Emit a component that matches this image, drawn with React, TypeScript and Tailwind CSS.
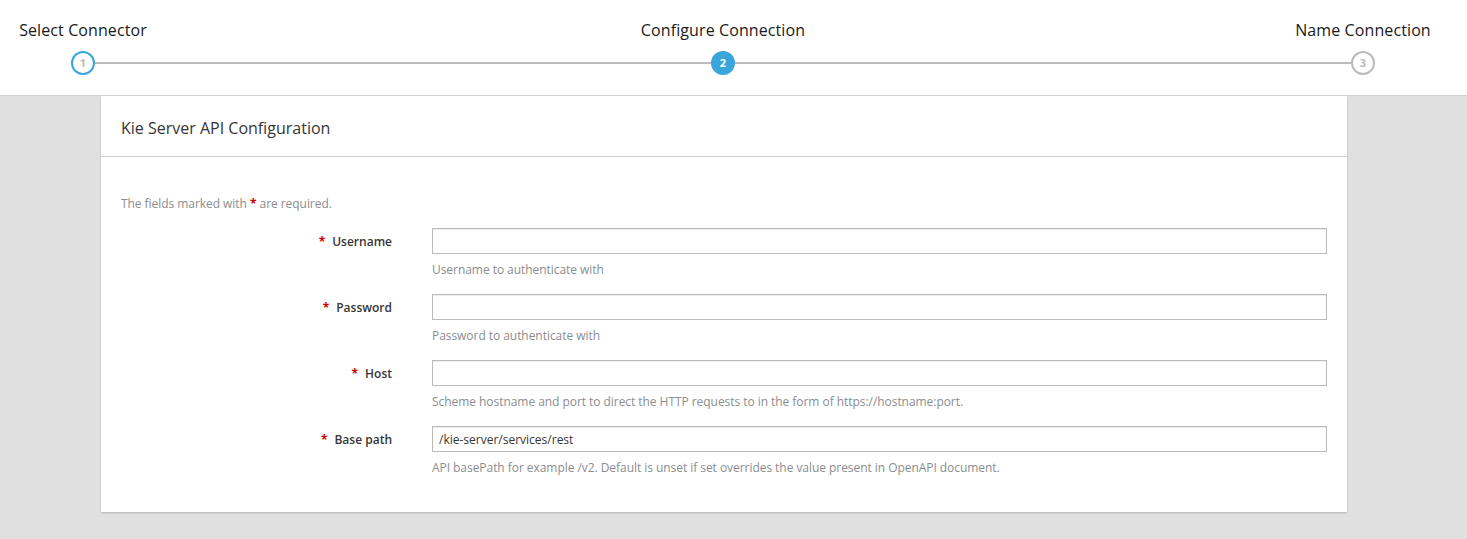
import React from "react";

const font = { fontFamily: '"Open Sans", "Noto Sans", sans-serif' };

function Circle({ n, state }: { n: number; state: "done" | "active" | "todo" }) {
  if (state === "active")
    return (
      <div className="w-[24px] h-[24px] rounded-full bg-[#39a5dc] flex items-center justify-center text-white text-[11px] font-bold shrink-0">
        {n}
      </div>
    );
  if (state === "done")
    return (
      <div className="w-[24px] h-[24px] rounded-full border-2 border-[#39a5dc] bg-white flex items-center justify-center text-[#bbbbbb] text-[11px] font-bold shrink-0">
        {n}
      </div>
    );
  return (
    <div className="w-[24px] h-[24px] rounded-full border-2 border-[#bbbbbb] bg-white flex items-center justify-center text-[#bbbbbb] text-[11px] font-bold shrink-0">
      {n}
    </div>
  );
}

function Field({ label, help, value }: { label: string; help: string; value?: string }) {
  return (
    <div className="flex mb-[15px]">
      <div className="w-[271px] h-[26px] pt-[2px] flex items-center justify-end text-[12px] font-semibold text-[#363636]">
        <span className="text-[#cc0000] font-bold mr-[7px]">*</span>
        <span>{label}</span>
      </div>
      <div className="ml-[40px] w-[895px]">
        <div className="h-[26px] border border-[#bbbbbb] shadow-[inset_0_1px_1px_rgba(3,3,3,0.075)] bg-white flex items-center px-[6px] pt-[1px] text-[12px] text-[#363636]">
          {value ?? ""}
        </div>
        <div className="mt-[7px] text-[12px] leading-[18px] tracking-[-0.05px] text-[#8b8d8f]">{help}</div>
      </div>
    </div>
  );
}

export default function App() {
  return (
    <div className="min-h-screen bg-[#e0e0e0]" style={font}>
      <div className="bg-white border-b border-[#d1d1d1]">
        <div className="w-[1446px] pt-[18px] pb-[20px]">
          <div className="flex justify-between text-[16px] leading-[24px] tracking-[0.1px] text-[#1a1a1a]">
            <div className="w-[166px] text-center">Select Connector</div>
            <div className="w-[166px] text-center whitespace-nowrap flex justify-center">Configure Connection</div>
            <div className="w-[166px] text-center">Name Connection</div>
          </div>
          <div className="flex items-center mt-[9px] px-[71px]">
            <Circle n={1} state="done" />
            <div className="flex-1 h-[2px] bg-[#bbbbbb]" />
            <Circle n={2} state="active" />
            <div className="flex-1 h-[2px] bg-[#bbbbbb]" />
            <Circle n={3} state="todo" />
          </div>
        </div>
      </div>
      <div className="ml-[101px] w-[1246px] bg-white shadow-[0_1px_2px_rgba(3,3,3,0.2)]">
        <div className="px-[20px] pt-[20px] pb-[16px] border-b border-[#d1d1d1] text-[16px] leading-[24px] text-[#363636]">
          Kie Server API Configuration
        </div>
        <div className="px-[20px] pt-[38px] pb-[20px]">
          <div className="text-[12px] leading-[18px] tracking-[-0.05px] text-[#8b8d8f] mb-[15px]">
            The fields marked with <span className="text-[#cc0000] font-bold">*</span> are required.
          </div>
          <Field label="Username" help="Username to authenticate with" />
          <Field label="Password" help="Password to authenticate with" />
          <Field label="Host" help="Scheme hostname and port to direct the HTTP requests to in the form of https://hostname:port." />
          <Field
            label="Base path"
            value="/kie-server/services/rest"
            help="API basePath for example /v2. Default is unset if set overrides the value present in OpenAPI document."
          />
        </div>
      </div>
    </div>
  );
}
